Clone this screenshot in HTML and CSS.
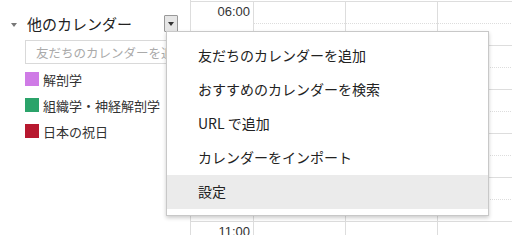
FILE: index.html
```html
<!DOCTYPE html>
<html lang="ja">
  <head>
    <meta charset="UTF-8" />
    <title>他のカレンダー</title>
    <link rel="stylesheet" href="styles.css">
  </head>
  <body>
    <div class="page">
      <div class="sidebar">
        <div class="section-head">
          <span class="toggle"><span class="toggle-arrow"></span></span>
          <span class="section-title">他のカレンダー</span>
          <span class="drop-btn"><span class="drop-arrow"></span></span>
        </div>
        <input class="add-input" type="text" placeholder="友だちのカレンダーを追加" />
        <ul class="cal-list">
          <li><span class="swatch purple"></span>解剖学</li>
          <li><span class="swatch green"></span>組織学・神経解剖学</li>
          <li><span class="swatch red"></span>日本の祝日</li>
        </ul>
      </div>

      <div class="grid">
        <div class="times">
          <div class="hour"><span>06:00</span></div>
          <div class="hour"><span>07:00</span></div>
          <div class="hour"><span>08:00</span></div>
          <div class="hour"><span>09:00</span></div>
          <div class="hour"><span>10:00</span></div>
          <div class="hour"><span>11:00</span></div>
        </div>
        <div class="day">
          <div class="slot"></div><div class="slot"></div><div class="slot"></div>
          <div class="slot"></div><div class="slot"></div><div class="slot"></div>
        </div>
        <div class="day">
          <div class="slot"></div><div class="slot"></div><div class="slot"></div>
          <div class="slot"></div><div class="slot"></div><div class="slot"></div>
        </div>
        <div class="day">
          <div class="slot"></div><div class="slot"></div><div class="slot"></div>
          <div class="slot"></div><div class="slot"></div><div class="slot"></div>
        </div>
      </div>

      <ul class="menu">
        <li>友だちのカレンダーを追加</li>
        <li>おすすめのカレンダーを検索</li>
        <li>URL で追加</li>
        <li>カレンダーをインポート</li>
        <li class="active">設定</li>
      </ul>
    </div>
  </body>
</html>
```

FILE: styles.css
```css
body {
  margin: 0;
  font-family: "Liberation Sans", "Noto Sans CJK JP", sans-serif;
  background: #fff;
  color: #222;
}
.page {
  position: relative;
  display: flex;
  width: 512px;
  height: 235px;
  overflow: hidden;
}
.sidebar {
  width: 190px;
  flex-shrink: 0;
  padding-top: 15px;
  box-sizing: border-box;
}
.section-head {
  display: flex;
  align-items: center;
  height: 17px;
}
.toggle {
  width: 16px;
  margin-left: 11px;
  display: flex;
  align-items: center;
  padding-top: 3px;
}
.toggle-arrow {
  width: 0;
  height: 0;
  border-left: 3px solid transparent;
  border-right: 3px solid transparent;
  border-top: 4px solid #777;
}
.section-title {
  font-family: "Noto Sans CJK JP", sans-serif;
  font-size: 15px;
  color: #222;
  width: 137px;
  white-space: nowrap;
}
.drop-btn {
  width: 12px;
  height: 15px;
  border: 1px solid #999;
  background: #e6e6e6;
  border-radius: 1px;
  display: flex;
  align-items: center;
  justify-content: center;
}
.drop-arrow {
  width: 0;
  height: 0;
  border-left: 3px solid transparent;
  border-right: 3px solid transparent;
  border-top: 4px solid #333;
}
.add-input {
  display: block;
  margin: 8px 0 0 25px;
  width: 175px;
  height: 24px;
  box-sizing: border-box;
  border: 1px solid #d9d9d9;
  padding: 0 9px 0 10px;
  font-family: "Noto Sans CJK JP", sans-serif;
  font-size: 12.5px;
  color: #222;
}
.add-input::placeholder {
  color: #aaa;
}
.cal-list {
  list-style: none;
  margin: 2px 0 0 25px;
  padding: 0;
}
.cal-list li {
  display: flex;
  align-items: center;
  height: 26px;
  font-family: "Noto Sans CJK JP", sans-serif;
  font-size: 13px;
  color: #333;
}
.swatch {
  width: 14px;
  height: 14px;
  margin-right: 4px;
  box-sizing: border-box;
}
.purple { background: #cf7be6; }
.green { background: #2ba36a; }
.red { background: #b7182f; }

.grid {
  display: flex;
  flex: 1;
  border-left: 1px solid #ddd;
  padding-top: 1px;
}
.times {
  width: 62px;
  border-right: 1px solid #ddd;
}
.hour {
  height: 44px;
  border-top: 1px solid #ddd;
  box-sizing: border-box;
  text-align: right;
  padding: 2px 3px 0 0;
  font-size: 13px;
  color: #333;
}
.day {
  width: 91px;
  border-right: 1px solid #ddd;
  flex-shrink: 0;
}
.slot {
  height: 44px;
  border-top: 1px solid #ddd;
  box-sizing: border-box;
  position: relative;
}
.slot::after {
  content: "";
  position: absolute;
  left: 0;
  right: 0;
  top: 21px;
  border-top: 1px dotted #ddd;
}

.menu {
  position: absolute;
  left: 166px;
  top: 31px;
  width: 323px;
  height: 185px;
  box-sizing: border-box;
  margin: 0;
  padding: 7px 0 0 0;
  list-style: none;
  background: #fff;
  border: 1px solid #c8c8c8;
  box-shadow: 0 2px 4px rgba(0, 0, 0, 0.2);
}
.menu li {
  height: 34px;
  line-height: 32px;
  padding-left: 31px;
  font-family: "Noto Sans CJK JP", sans-serif;
  font-size: 14px;
  color: #222;
}
.menu li.active {
  background: #ebebeb;
}
```
